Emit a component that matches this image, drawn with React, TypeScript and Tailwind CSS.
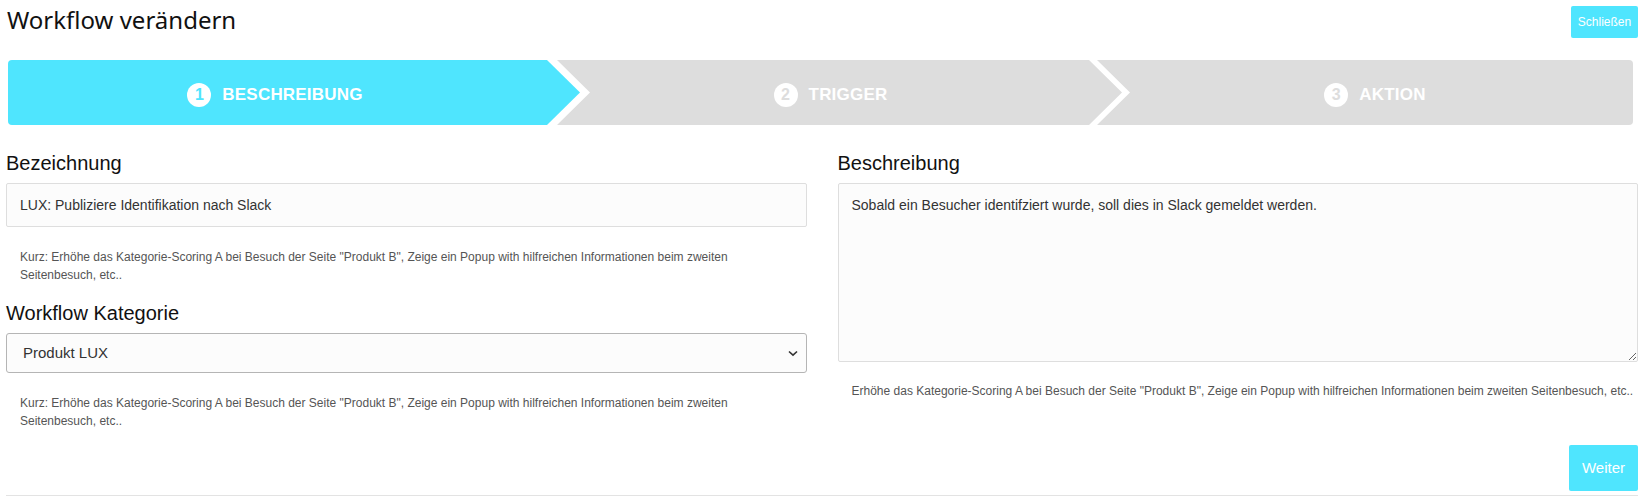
import React from "react";

const HELP =
  'Kurz: Erhöhe das Kategorie-Scoring A bei Besuch der Seite "Produkt B", Zeige ein Popup with hilfreichen Informationen beim zweiten Seitenbesuch, etc..';

function StepLabel({ n, label, active }: { n: number; label: string; active: boolean }) {
  return (
    <div className="flex items-center gap-[11px] pt-[5px]">
      <span
        className={
          "flex h-[24px] w-[24px] items-center justify-center rounded-full bg-white text-[16px] font-bold leading-none " +
          (active ? "text-[#4fe5fe]" : "text-[#dddddd]")
        }
      >
        {n}
      </span>
      <span className="text-[17px] font-bold uppercase tracking-[0.2px] text-white">{label}</span>
    </div>
  );
}

export default function App() {
  return (
    <div className="min-h-[498px] w-full bg-white px-[6px] font-['Liberation_Sans',Arial,sans-serif] text-[#222]">
      {/* Header */}
      <div className="flex items-start justify-between pt-[6px]">
        <h1 className="pl-[1px] font-['Noto_Sans',sans-serif] text-[24px] font-normal leading-[28px] text-[#111]">
          Workflow verändern
        </h1>
        <button className="h-[32px] w-[67px] rounded-[2px] bg-[#4fe5fe] text-[12px] text-white">Schließen</button>
      </div>

      {/* Steps */}
      <div className="ml-[2px] mr-[5px] mt-[22px] flex h-[65px]">
        <div className="flex w-[572px] shrink-0 items-center justify-center rounded-l-[4px] bg-[#4fe5fe] pr-[38px] [clip-path:polygon(0_0,calc(100%_-_33px)_0,100%_50%,calc(100%_-_33px)_100%,0_100%)]">
          <StepLabel n={1} label="Beschreibung" active />
        </div>
        <div className="-ml-[23px] flex w-[565px] shrink-0 items-center justify-center bg-[#dddddd] pl-[12px] pr-[30px] [clip-path:polygon(0_0,calc(100%_-_33px)_0,100%_50%,calc(100%_-_33px)_100%,0_100%,33px_50%)]">
          <StepLabel n={2} label="Trigger" active={false} />
        </div>
        <div className="-ml-[25px] flex flex-1 items-center justify-center rounded-r-[4px] bg-[#dddddd] pl-[20px] [clip-path:polygon(0_0,100%_0,100%_100%,0_100%,33px_50%)]">
          <StepLabel n={3} label="Aktion" active={false} />
        </div>
      </div>

      {/* Form */}
      <div className="mt-[26px] grid grid-cols-2 gap-x-[31px]">
        <div className="flex flex-col">
          <label className="text-[20px] leading-[24px] text-[#111]">Bezeichnung</label>
          <div className="mt-[8px] flex h-[44px] items-center rounded-[2px] border border-[#dedede] bg-[#fcfcfc] px-[13px] text-[14px] text-[#333]">
            LUX: Publiziere Identifikation nach Slack
          </div>
          <p className="mt-[21px] px-[14px] text-[12px] leading-[18px] text-[#555]">{HELP}</p>

          <label className="mt-[17px] text-[20px] leading-[24px] text-[#111]">Workflow Kategorie</label>
          <div className="relative mt-[8px] flex h-[40px] items-center rounded-[3px] border border-[#b5b5b5] bg-[#fcfcfc] px-[16px] text-[15px] text-[#333]">
            Produkt LUX
            <svg
              className="absolute right-[8px] top-[16px]"
              width="10"
              height="7"
              viewBox="0 0 10 7"
              fill="none"
              stroke="#333"
              strokeWidth="1.6"
            >
              <path d="M1 1.5 L5 5.2 L9 1.5" />
            </svg>
          </div>
          <p className="mt-[21px] px-[14px] text-[12px] leading-[18px] text-[#555]">{HELP}</p>
        </div>

        <div className="flex flex-col">
          <label className="text-[20px] leading-[24px] text-[#111]">Beschreibung</label>
          <textarea
            className="mt-[8px] h-[179px] rounded-[2px] border border-[#dedede] bg-[#fcfcfc] px-[13px] pt-[11px] text-[14px] leading-[20px] text-[#333] outline-none"
            defaultValue="Sobald ein Besucher identifziert wurde, soll dies in Slack gemeldet werden."
          />
          <p className="mt-[20px] pl-[14px] text-[12px] leading-[18px] whitespace-nowrap text-[#555]">
            Erhöhe das Kategorie-Scoring A bei Besuch der Seite "Produkt B", Zeige ein Popup with hilfreichen Informationen beim zweiten Seitenbesuch, etc..
          </p>
        </div>
      </div>

      {/* Footer */}
      <div className="mt-[15px] flex justify-end">
        <button className="h-[46px] w-[69px] rounded-[2px] bg-[#4fe5fe] text-[15px] text-white">Weiter</button>
      </div>
      <div className="mt-[4px] border-t border-[#e3e3e3]" />
    </div>
  );
}
